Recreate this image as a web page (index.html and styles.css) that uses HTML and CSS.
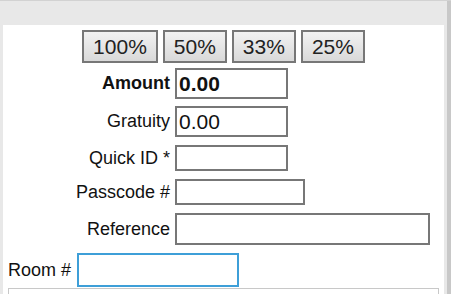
FILE: index.html
```html
<!DOCTYPE html>
<html lang="en">
  <head>
    <meta charset="UTF-8" />
    <meta name="viewport" content="width=device-width, initial-scale=1.0" />
    <title>Payment</title>
    <link rel="stylesheet" href="styles.css">
  </head>
  <body>
    <div class="frame">
      <div class="panel">
        <!-- Split buttons -->
        <div class="split-buttons">
          <button class="split-btn">100%</button>
          <button class="split-btn">50%</button>
          <button class="split-btn">33%</button>
          <button class="split-btn">25%</button>
        </div>

        <form class="pay-form">
          <div class="form-row">
            <label class="row-label bold" for="amount">Amount</label>
            <input class="field field-amount bold" type="text" id="amount" value="0.00" />
          </div>
          <div class="form-row">
            <label class="row-label" for="gratuity">Gratuity</label>
            <input class="field field-amount" type="text" id="gratuity" value="0.00" />
          </div>
          <div class="form-row">
            <label class="row-label" for="quickId">Quick ID *</label>
            <input class="field field-short" type="text" id="quickId" />
          </div>
          <div class="form-row">
            <label class="row-label" for="passcode">Passcode #</label>
            <input class="field field-passcode" type="password" id="passcode" />
          </div>
          <div class="form-row">
            <label class="row-label" for="reference">Reference</label>
            <input class="field field-reference" type="text" id="reference" />
          </div>
          <div class="room-row">
            <label class="room-label" for="room">Room #</label>
            <input class="field field-room" type="text" id="room" />
          </div>
        </form>

        <div class="notes-box"></div>
      </div>
    </div>
    <div class="scrollbar"></div>
  </body>
</html>
```

FILE: styles.css
```css
:root {
  --frame-gray: #e8e8e8;
  --edge-gray: #c8c8c8;
  --field-border: #777777;
  --focus-blue: #3e9fd8;
  --text: #111111;
  --white: #ffffff;
}

* {
  margin: 0;
  padding: 0;
  box-sizing: border-box;
  font-family: "Liberation Sans", Arial, sans-serif;
}

html,
body {
  height: 100%;
  overflow: hidden;
}

body {
  display: flex;
  background-color: var(--frame-gray);
  border-top: 1px solid #d2d2d2;
  color: var(--text);
}

.frame {
  flex: 1;
  padding: 24px 3px 0 3px;
}

.scrollbar {
  width: 4px;
  background-color: var(--edge-gray);
}

.panel {
  background-color: var(--white);
  height: 100%;
  padding: 5px 5px 0 5px;
  overflow: hidden;
}

/* Split buttons */
.split-buttons {
  display: flex;
  justify-content: center;
  gap: 5px;
}

.split-btn {
  height: 33px;
  padding: 0 9px;
  border: 2px solid var(--field-border);
  background: linear-gradient(#f2f2f2, #d9d9d9);
  color: #222222;
  font-size: 21px;
  cursor: pointer;
}

/* Form */
.pay-form {
  display: flex;
  flex-direction: column;
  gap: 8px;
  margin-top: 5px;
}

.form-row {
  display: flex;
  align-items: center;
}

.form-row:first-child {
  margin-bottom: -1px;
}

.row-label {
  width: 162px;
  margin-right: 5px;
  text-align: right;
  font-size: 18px;
}

.bold {
  font-weight: bold;
}

.field {
  border: 2px solid var(--field-border);
  padding: 0 2px;
  font-size: 21px;
  color: var(--text);
  background-color: var(--white);
  outline: none;
}

.field-amount {
  width: 113px;
  height: 31px;
}

.field-short {
  width: 113px;
  height: 26px;
}

.field-passcode {
  width: 130px;
  height: 26px;
}

.field-reference {
  width: 255px;
  height: 32px;
}

.room-row {
  display: flex;
  align-items: center;
}

.room-label {
  font-size: 18px;
  margin-right: 6px;
}

.field-room {
  width: 162px;
  height: 34px;
  border-color: var(--focus-blue);
}

.notes-box {
  height: 40px;
  margin-top: 1px;
  border: 1px solid var(--edge-gray);
}
```
